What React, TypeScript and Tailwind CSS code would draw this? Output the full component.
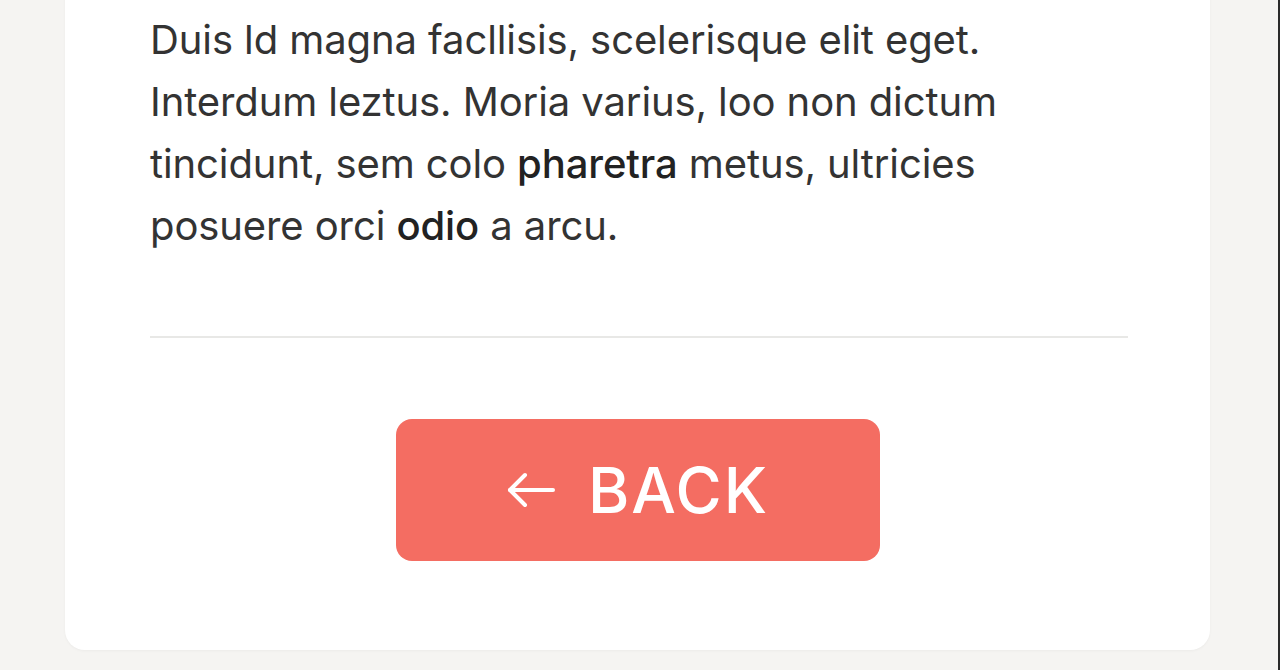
import React from "react";

function ArrowLeft() {
  return (
    <svg width="50" height="38" viewBox="0 0 50 38" fill="none" stroke="currentColor" strokeWidth="4" strokeLinecap="round" strokeLinejoin="round">
      <path d="M47 19H4" />
      <path d="M19 4L4 19l15 15" />
    </svg>
  );
}

export default function App() {
  return (
    <div className="flex h-[670px] w-[1280px] overflow-hidden bg-[#f5f4f2] font-['Inter',sans-serif]">
      <div className="ml-[65px] mt-[-40px] flex h-[690px] w-[1145px] flex-col rounded-[20px] bg-white shadow-[0_1px_3px_rgba(0,0,0,0.04)]">
        <p className="ml-[85px] mt-[49px] text-[40px] leading-[62px] tracking-[-0.1px] text-[#333333]">
          Duis ld magna facllisis, scelerisque elit eget.
          <br />
          Interdum leztus. Moria varius, loo non dictum
          <br />
          tincidunt, sem colo <span className="font-medium text-[#222222]">pharetra</span> metus, ultricies
          <br />
          posuere orci <span className="font-medium text-[#222222]">odio</span> a arcu.
        </p>
        <div className="ml-[85px] mt-[79px] h-[2px] w-[978px] bg-[#e8e8e6]" />
        <div className="mt-[81px] flex justify-center">
          <button className="flex h-[142px] w-[484px] items-center justify-center gap-[32px] rounded-[16px] bg-[#f46d62] text-white">
            <ArrowLeft />
            <span className="text-[63px] font-medium leading-none tracking-[2px]">BACK</span>
          </button>
        </div>
      </div>
      <div className="ml-auto h-full w-[2px] shrink-0 bg-[#2a2a2a]" />
    </div>
  );
}
